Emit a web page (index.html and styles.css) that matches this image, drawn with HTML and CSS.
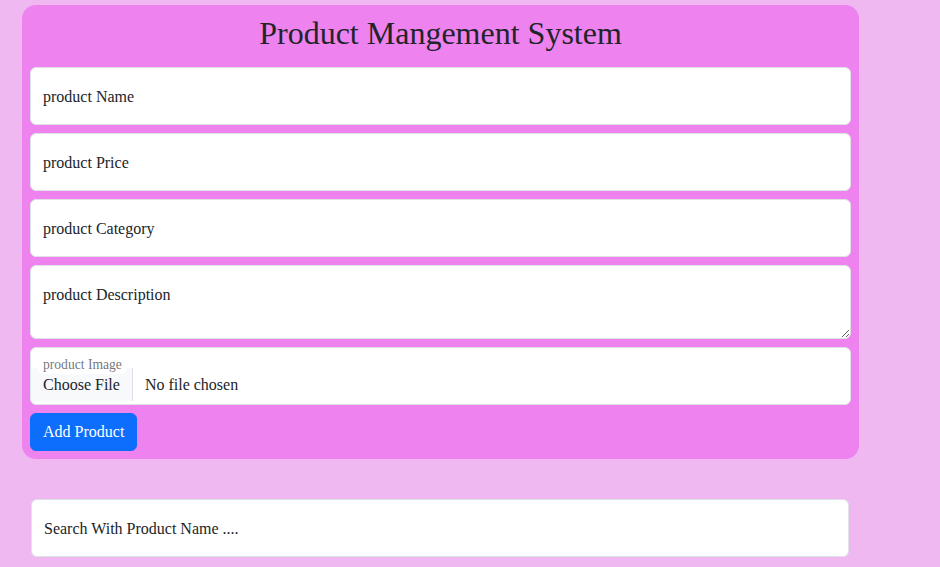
FILE: index.html
```html
<!DOCTYPE html>
<html lang="en">
<head>
<meta charset="utf-8">
<title>Product Mangement System</title>
<link rel="stylesheet" href="styles.css">
</head>
<body>
<main class="page">
  <section class="card">
    <h1 class="title">Product Mangement System</h1>
    <form class="form">
      <input class="field" type="text" placeholder="product Name">
      <input class="field" type="text" placeholder="product Price">
      <input class="field" type="text" placeholder="product Category">
      <textarea class="field area" placeholder="product Description"></textarea>
      <div class="field file">
        <span class="file-label">product Image</span>
        <div class="file-row">
          <span class="file-btn">Choose File</span>
          <span class="file-name">No file chosen</span>
        </div>
      </div>
      <div class="actions">
        <button type="button" class="btn">Add Product</button>
      </div>
    </form>
  </section>
  <section class="search-wrap">
    <input class="field search" type="text" placeholder="Search With Product Name ....">
  </section>
</main>
</body>
</html>
```

FILE: styles.css
```css
* { box-sizing: border-box; }
html, body { margin: 0; padding: 0; }
body {
  background: #f0b8f0;
  font-family: "Liberation Serif", "Times New Roman", serif;
  font-size: 16px;
  color: #212529;
  overflow: hidden;
}
.page {
  padding: 5px 0 0 22px;
  width: 859px;
}
.card {
  background: #ee82ee;
  border-radius: 14px;
  padding: 9px 8px 8px 8px;
}
.title {
  margin: 0 0 15px;
  text-align: center;
  font-weight: 400;
  font-size: 32px;
  line-height: 38px;
  color: #212529;
}
.form {
  display: flex;
  flex-direction: column;
  gap: 8px;
}
.field {
  display: block;
  width: 100%;
  height: 58px;
  border: 1px solid #dee2e6;
  border-radius: 6px;
  background: #fff;
  padding: 1px 12px 0;
  font-family: inherit;
  font-size: 16px;
  color: #212529;
  outline: none;
}
.field::placeholder { color: #212529; opacity: 1; }
.area {
  height: 74px;
  padding: 17px 12px 15px;
  line-height: 24px;
  resize: vertical;
}
.file {
  position: relative;
  padding: 0;
  overflow: hidden;
}
.file-label {
  position: absolute;
  left: 7px;
  top: 8px;
  padding: 0 5px;
  background: #fff;
  border-radius: 6px;
  font-size: 13.6px;
  line-height: 18px;
  color: rgba(33, 37, 41, 0.65);
  z-index: 1;
}
.file-row {
  display: flex;
  align-items: stretch;
  margin-top: 20px;
  height: 33px;
}
.file-btn {
  display: flex;
  align-items: center;
  padding: 0 12px 0 12px;
  background: #f8f9fa;
  border-right: 1px solid #dee2e6;
  color: #212529;
}
.file-name {
  display: flex;
  align-items: center;
  padding-left: 12px;
}
.actions { display: flex; }
.btn {
  background: #0d6efd;
  color: #fff;
  border: 1px solid #0d6efd;
  border-radius: 6px;
  padding: 6px 12px;
  font-family: inherit;
  font-size: 16px;
  line-height: 24px;
  cursor: pointer;
}
.search-wrap {
  padding: 40px 10px 0 9px;
}
.search {
  height: 58px;
}
```
